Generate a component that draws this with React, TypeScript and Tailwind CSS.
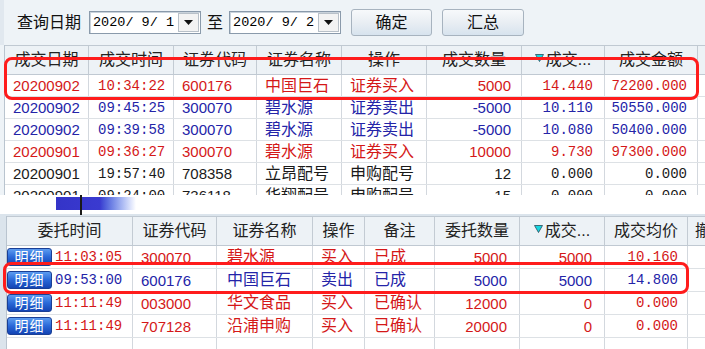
import React from "react";

const SANS = "font-['Liberation_Sans','Noto_Sans_CJK_SC',sans-serif]";
const MONO = "font-['Liberation_Mono','Noto_Sans_CJK_SC',monospace]";

const RED = "text-[#d41818]";
const BLUE = "text-[#2424a8]";
const BLACK = "text-[#1a1a1a]";

const topCols = [84, 85, 83, 85, 85, 95, 83, 93, 30];
const botCols = [126, 84, 96, 52, 70, 85, 85, 83, 40];

type CellDef = { t: string; kind: "date" | "mono" | "num" | "cjk" | "dec"; align: "l" | "r" };

function Tri() {
  return (
    <svg width="9" height="8" viewBox="0 0 9 8" className="mr-[2px] mt-[-4px]">
      <polygon points="0.5,0.5 8.5,0.5 4.5,7.5" fill="#16d6e0" stroke="#2a4a5a" strokeWidth="0.8" />
    </svg>
  );
}

function HeaderCell({ w, label, tri, h, left }: { w: number; label: string; tri?: boolean; h: number; left?: boolean }) {
  return (
    <div
      className={`flex items-center shrink-0 border-r border-[#c3cbd3] overflow-hidden whitespace-nowrap text-[16px] leading-none text-[#222] ${
        left ? "justify-start pl-[7px]" : "justify-center"
      }`}
      style={{ width: w, height: h }}
    >
      {tri && <Tri />}
      {label}
    </div>
  );
}

function DataCell({ w, c, color, h, pl, pr }: { w: number; c: CellDef; color: string; h: number; pl: number; pr: number }) {
  const font =
    c.kind === "mono"
      ? `${MONO} text-[14px]`
      : c.kind === "dec"
      ? `${MONO} text-[14px]`
      : c.kind === "cjk"
      ? "text-[16px]"
      : "text-[15px]";
  return (
    <div
      className={`flex items-center shrink-0 border-r border-[#d3d8de] overflow-hidden whitespace-nowrap leading-none ${font} ${color} ${
        c.align === "r" ? "justify-end" : "justify-start"
      }`}
      style={{ width: w, height: h, paddingLeft: c.align === "l" ? pl : 0, paddingRight: c.align === "r" ? pr : 0 }}
    >
      {c.t}
    </div>
  );
}

const topRows: { color: string; cells: string[] }[] = [
  { color: RED, cells: ["20200902", "10:34:22", "600176", "中国巨石", "证券买入", "5000", "14.440", "72200.000"] },
  { color: BLUE, cells: ["20200902", "09:45:25", "300070", "碧水源", "证券卖出", "-5000", "10.110", "50550.000"] },
  { color: BLUE, cells: ["20200902", "09:39:58", "300070", "碧水源", "证券卖出", "-5000", "10.080", "50400.000"] },
  { color: RED, cells: ["20200901", "09:36:27", "300070", "碧水源", "证券买入", "10000", "9.730", "97300.000"] },
  { color: BLACK, cells: ["20200901", "19:57:40", "708358", "立昂配号", "申购配号", "12", "0.000", "0.000"] },
  { color: BLACK, cells: ["20200901", "09:24:00", "736118", "华翔配号", "申购配号", "15", "0.000", "0.000"] },
];
const topKinds: CellDef["kind"][] = ["date", "mono", "num", "cjk", "cjk", "num", "dec", "dec"];
const topPad = [8, 9, 8, 8, 8, 10, 11, 10];

const botRows: { color: string; cells: string[] }[] = [
  { color: RED, cells: ["11:03:05", "300070", "碧水源", "买入", "已成", "5000", "5000", "10.160"] },
  { color: BLUE, cells: ["09:53:00", "600176", "中国巨石", "卖出", "已成", "5000", "5000", "14.800"] },
  { color: RED, cells: ["11:11:49", "003000", "华文食品", "买入", "已确认", "12000", "0", "0.000"] },
  { color: RED, cells: ["11:11:49", "707128", "沿浦申购", "买入", "已确认", "20000", "0", "0.000"] },
];
const botKinds: CellDef["kind"][] = ["mono", "num", "cjk", "cjk", "cjk", "num", "num", "dec"];
const botPad = [3, 8, 10, 8, 9, 12, 12, 9];

function DateBox({ v }: { v: string }) {
  return (
    <div className="flex items-center w-[112px] h-[23px] bg-white border border-[#8a9aab] shadow-[inset_1px_1px_0_#c9d2db]">
      <div className={`flex-1 pl-[3px] ${MONO} text-[13.5px] leading-none text-black whitespace-pre`}>{v}</div>
      <div className="flex items-center justify-center w-[21px] h-[19px] mr-[1px] bg-[#f3f3f3] border border-[#b8c0c8]">
        <svg width="9" height="5" viewBox="0 0 9 5">
          <polygon points="0,0 9,0 4.5,5" fill="#111" />
        </svg>
      </div>
    </div>
  );
}

function Btn({ label, w }: { label: string; w: number }) {
  return (
    <div
      className="flex items-center justify-center h-[27px] rounded-[3px] border border-[#a7b3bf] bg-gradient-to-b from-[#f7f9fb] via-[#e9eef3] to-[#d7e3ee] text-[16px] leading-none text-[#111]"
      style={{ width: w }}
    >
      {label}
    </div>
  );
}

export default function App() {
  return (
    <div className={`relative w-[705px] h-[349px] overflow-hidden bg-white ${SANS}`}>
      {/* top panel */}
      <div className="h-[195px] bg-[#eef3f7] overflow-hidden flex flex-col">
        <div className="h-[45px] shrink-0 flex items-center pl-[13px] border-l-[4px] border-[#e1e8ef]">
          <span className="text-[16px] leading-none text-[#111] mr-[8px]">查询日期</span>
          <DateBox v="2020/ 9/ 1" />
          <span className="text-[16px] leading-none text-[#111] mx-[6px]">至</span>
          <DateBox v="2020/ 9/ 2" />
          <div className="ml-[10px]">
            <Btn label="确定" w={81} />
          </div>
          <div className="ml-[10px]">
            <Btn label="汇总" w={82} />
          </div>
        </div>
        <div className="flex flex-col ml-[4px] border-l border-[#b9c4cf]">
          <div className="flex bg-[#edf2f6] border-t border-b border-[#c0c9d2]">
            {["成交日期", "成交时间", "证券代码", "证券名称", "操作", "成交数量", "成交...", "成交金额", ""].map((l, i) => (
              <HeaderCell key={i} w={topCols[i]} h={28} label={l} tri={i === 6} />
            ))}
          </div>
          {topRows.map((r, ri) => (
            <div key={ri} className="flex bg-white border-b border-[#dde1e5]">
              {r.cells.map((t, ci) => (
                <DataCell
                  key={ci}
                  w={topCols[ci]}
                  h={21}
                  c={{ t, kind: topKinds[ci], align: ci >= 5 ? "r" : "l" }}
                  color={r.color}
                  pl={topPad[ci]}
                  pr={topPad[ci]}
                />
              ))}
              <div className="shrink-0 bg-white" style={{ width: topCols[8], height: 21 }} />
            </div>
          ))}
        </div>
      </div>

      {/* splitter band */}
      <div className="relative h-[19px] bg-white">
        <div className="absolute left-[56px] top-[2px] w-[80px] h-[13px] bg-gradient-to-r from-[#3434c8] via-[#3a3ad0] via-55% to-white" />
        <div className="absolute left-[80px] top-0 w-[2px] h-[20px] bg-[#1a1a1a]" />
      </div>

      {/* bottom panel */}
      <div className="h-[135px] bg-[#dbe4ec] pt-[2px] pl-[6px]">
        <div className="h-full flex flex-col bg-white border-l border-[#b9c4cf]">
          <div className="flex bg-[#edf2f6] border-t border-b border-[#c0c9d2]">
            {["委托时间", "证券代码", "证券名称", "操作", "备注", "委托数量", "成交...", "成交均价", "撤单"].map((l, i) => (
              <HeaderCell key={i} w={botCols[i]} h={28} label={l} tri={i === 6} left={i === 8} />
            ))}
          </div>
          {botRows.map((r, ri) => (
            <div key={ri} className="flex bg-white border-b border-[#dde1e5]">
              <div className="flex items-center shrink-0 border-r border-[#d3d8de] overflow-hidden" style={{ width: botCols[0], height: 22 }}>
                <div className="flex items-center justify-center w-[45px] h-[18px] rounded-[3px] bg-gradient-to-b from-[#5d9cf0] via-[#2a68d8] to-[#1444b4] border border-[#1a3f95] text-[14px] leading-none text-white tracking-[1px] shrink-0">
                  明细
                </div>
                <span className={`ml-[3px] ${MONO} text-[14px] leading-none ${r.color}`}>{r.cells[0]}</span>
              </div>
              {r.cells.slice(1).map((t, ci) => (
                <DataCell
                  key={ci}
                  w={botCols[ci + 1]}
                  h={22}
                  c={{ t, kind: botKinds[ci + 1], align: ci + 1 >= 5 ? "r" : "l" }}
                  color={r.color}
                  pl={botPad[ci + 1]}
                  pr={botPad[ci + 1]}
                />
              ))}
            </div>
          ))}
          <div className="flex flex-1">
            {botCols.map((w, i) => (
              <div key={i} className="shrink-0 border-r border-[#d3d8de]" style={{ width: w }} />
            ))}
          </div>
        </div>
      </div>

      {/* highlight overlays */}
      <div className="absolute left-[4px] top-[57px] w-[695px] h-[43px] border-[3px] border-[#ff1c1c] rounded-[8px]" />
      <div className="absolute left-[3px] top-[262px] w-[686px] h-[32px] border-[3px] border-[#ff1c1c] rounded-[8px]" />
    </div>
  );
}
